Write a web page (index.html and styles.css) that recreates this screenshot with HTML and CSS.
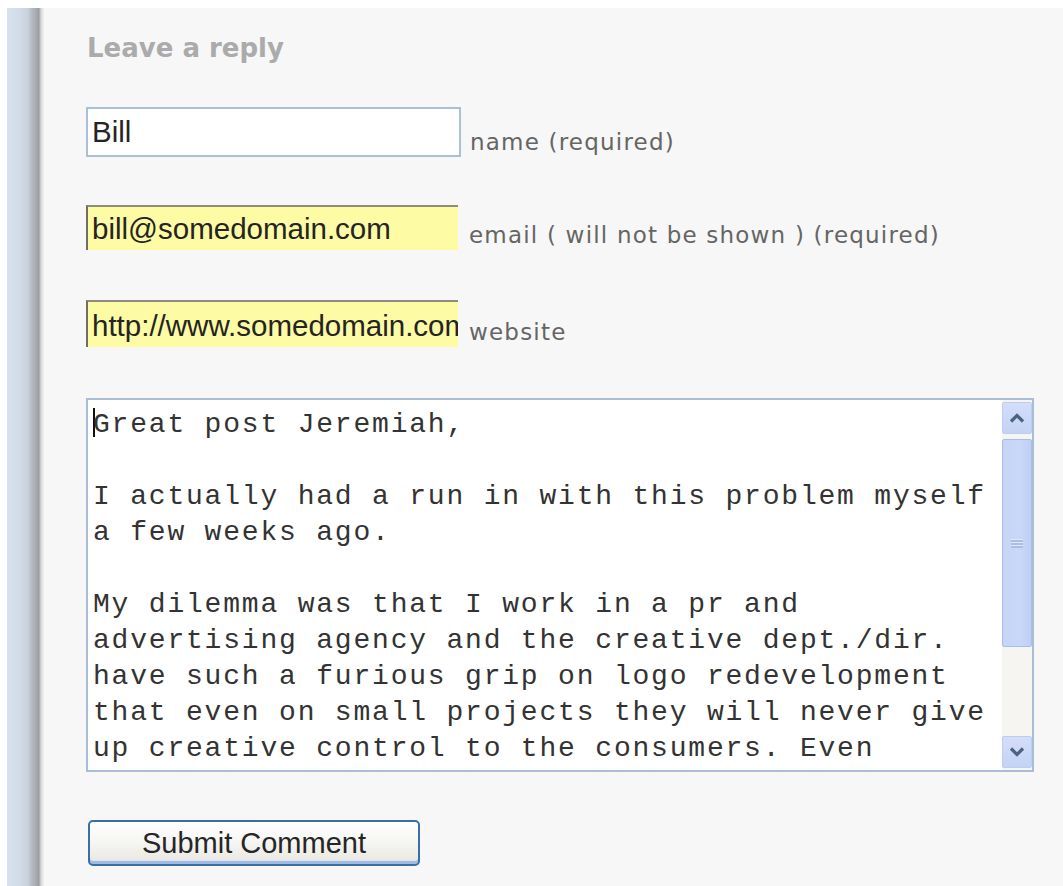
FILE: index.html
```html
<!DOCTYPE html>
<html lang="en">
<head>
<meta charset="utf-8">
<title>Leave a reply</title>
<link rel="stylesheet" href="styles.css">
</head>
<body>
<div class="page">
  <div class="rail"></div>
  <main class="content">
    <h3 class="reply-title">Leave a reply</h3>
    <form class="reply-form">
      <div class="field field-name">
        <input class="text-input plain" type="text" value="Bill">
        <label class="field-label">name (required)</label>
      </div>
      <div class="field field-email">
        <input class="text-input filled" type="text" value="bill@somedomain.com">
        <label class="field-label">email ( will not be shown ) (required)</label>
      </div>
      <div class="field field-site">
        <input class="text-input filled" type="text" value="http://www.somedomain.com">
        <label class="field-label">website</label>
      </div>
      <div class="comment-box">
        <div class="comment-text"><span class="caret"></span>Great post Jeremiah,

I actually had a run in with this problem myself
a few weeks ago.

My dilemma was that I work in a pr and
advertising agency and the creative dept./dir.
have such a furious grip on logo redevelopment
that even on small projects they will never give
up creative control to the consumers. Even</div>
        <div class="scrollbar">
          <div class="sb-btn">
            <svg width="16" height="10" viewBox="0 0 16 10"><path d="M2 8.5 L8 2.5 L14 8.5" fill="none" stroke="#4d6185" stroke-width="3.2"/></svg>
          </div>
          <div class="sb-thumb"><span class="grip"></span></div>
          <div class="sb-track"></div>
          <div class="sb-btn">
            <svg width="16" height="10" viewBox="0 0 16 10"><path d="M2 1.5 L8 7.5 L14 1.5" fill="none" stroke="#4d6185" stroke-width="3.2"/></svg>
          </div>
        </div>
      </div>
      <div class="actions">
        <button class="submit-btn" type="button">Submit Comment</button>
      </div>
    </form>
  </main>
</div>
</body>
</html>
```

FILE: styles.css
```css
html, body {
  margin: 0;
  background: #ffffff;
}

body {
  padding: 8px 0 0 7px;
  height: 886px;
  box-sizing: border-box;
  overflow: hidden;
}

.page {
  display: flex;
  height: 100%;
}

/* sidebar edge on the left of the comment column */
.rail {
  width: 37px;
  flex: none;
  background: linear-gradient(to right,
    #d8e2ef 0px, #d2dbe8 12px, #c9d1dc 21px,
    #b9bec5 24px, #a9acb1 29px, #9a9b9e 32px,
    #c4c4c4 33px, #e2e2e2 35px, #f1f1f1 37px);
}

.content {
  flex: 1;
  background: #f7f7f7;
  padding: 25px 0 0 42px;
}

.reply-title {
  margin: 0 0 44px 1px;
  font: bold 26px/30px "DejaVu Sans", Verdana, sans-serif;
  color: #ababab;
}

.reply-form {
  display: flex;
  flex-direction: column;
}

.field {
  display: flex;
  align-items: flex-end;
}

.field-name { margin-bottom: 48px; }
.field-email { margin-bottom: 50px; }
.field-site { margin-bottom: 51px; }

.text-input {
  box-sizing: border-box;
  margin: 0;
  font: 29.5px "Liberation Sans", Arial, sans-serif;
  color: #242424;
  outline: none;
  flex: none;
}

.text-input.plain {
  width: 375px;
  height: 50px;
  border: 2px solid #aac0da;
  background: #ffffff;
  padding: 0 4px;
}

.text-input.filled {
  width: 372px;
  background: #fdfba3;
  border: none;
  border-top: 2px solid #8d8c7f;
  border-left: 2px solid #6f6e62;
  padding: 0 0 0 4px;
}

.field-email .text-input { height: 45px; }
.field-site .text-input { height: 47px; padding-top: 3px; }

.field-label {
  font: 23px/28px "DejaVu Sans", Verdana, sans-serif;
  color: #656565;
  letter-spacing: 1.2px;
  padding: 0 0 1px 11px;
}

.field-name .field-label { padding-left: 9px; }

.comment-box {
  box-sizing: border-box;
  width: 948px;
  height: 374px;
  border: 2px solid #a9bdd6;
  background: #ffffff;
  display: flex;
  margin-bottom: 48px;
}

.comment-text {
  flex: 1;
  overflow: hidden;
  white-space: pre;
  padding: 7px 0 0 5px;
  font: 28px/36px "Liberation Mono", "Courier New", monospace;
  letter-spacing: 1.8px;
  color: #333333;
}

.caret {
  display: inline-block;
  width: 0;
  height: 29px;
  border-left: 2px solid #111;
  margin-right: -2px;
  vertical-align: -5px;
}

/* classic blue scrollbar */
.scrollbar {
  width: 30px;
  flex: none;
  display: flex;
  flex-direction: column;
  padding: 2px 0 2px 0;
  box-sizing: border-box;
  background: #f6f5f1;
}

.sb-btn {
  height: 32px;
  box-sizing: border-box;
  border: 1px solid #bccdf4;
  border-radius: 2px;
  background: linear-gradient(#d3def9, #c3d2f6);
  display: flex;
  align-items: center;
  justify-content: center;
  flex: none;
}

.sb-thumb {
  margin-top: 5px;
  height: 208px;
  box-sizing: border-box;
  border: 1px solid #a9bde9;
  border-radius: 2px;
  background: linear-gradient(to right, #c6d5f6, #c9d7f8 60%, #bfcff3);
  display: flex;
  align-items: center;
  justify-content: center;
  flex: none;
}

.grip {
  width: 12px;
  height: 9px;
  background: repeating-linear-gradient(#dfe8fc 0 1px, #aabde8 1px 3px);
}

.sb-track {
  flex: 1;
}

.actions {
  display: flex;
  padding-left: 2px;
}

.submit-btn {
  width: 332px;
  height: 46px;
  box-sizing: border-box;
  border: 2px solid #3c6ea6;
  border-radius: 5px;
  background: linear-gradient(#ffffff 0%, #f6f6f3 45%, #ecebe5 85%, #d9dde8 100%);
  box-shadow: inset 0 -3px 0 #9fbbe3;
  font: 29px "Liberation Sans", Arial, sans-serif;
  color: #262626;
  padding: 0;
  margin: 0;
}
```
